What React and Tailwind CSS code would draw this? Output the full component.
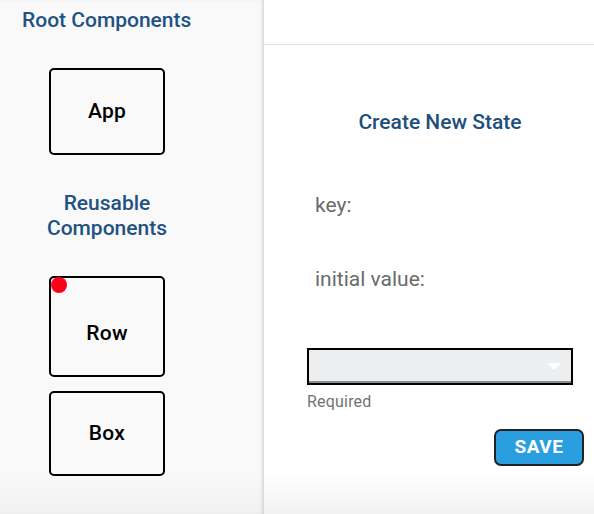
import React from 'react';

const ComponentBox = ({ label, dot, className = '' }) => (
  <div className={`relative flex items-center justify-center border-2 border-black rounded-[5px] bg-[#f9f9f9] w-[116px] ${className}`}>
    {dot && <span className="absolute left-0 top-[-1px] w-[16px] h-[16px] rounded-full bg-[#ff0019]" />}
    <span className="text-[21px] font-medium text-black tracking-[0.3px]">{label}</span>
  </div>
);

const App = () => {
  return (
    <div className="flex w-[594px] h-[514px] overflow-hidden bg-white" style={{ fontFamily: 'Roboto, "Liberation Sans", sans-serif' }}>
      {/* sidebar */}
      <div className="relative w-[264px] shrink-0 bg-gradient-to-b from-[#f9f9f9] from-[92%] to-[#f1f1f1] shadow-[inset_-3px_0_3px_-1px_rgba(0,0,0,0.12)]">
        <h2 className="pl-[22px] pt-[7px] text-[21px] font-medium text-[#1f5283] leading-[26px]">Root Components</h2>
        <div className="pl-[49px] pt-[35px]">
          <ComponentBox label="App" className="h-[87px]" />
        </div>
        <h2 className="w-[214px] pt-[36px] text-center text-[21px] font-medium text-[#1f5283] leading-[25px]">
          Reusable
          <br />
          Components
        </h2>
        <div className="pl-[49px] pt-[35px] flex flex-col gap-[14px]">
          <ComponentBox label="Row" dot className="h-[101px] pt-[14px]" />
          <ComponentBox label="Box" className="h-[85px]" />
        </div>
      </div>

      {/* main panel */}
      <div className="flex-1 flex flex-col bg-gradient-to-b from-white from-[92%] to-[#f2f2f2]">
        <div className="h-[45px] shrink-0 border-b border-[#e3e3e3]" />
        <h1 className="mt-[64px] pl-[22px] text-center text-[21px] font-medium text-[#1d4f7d] leading-[26px]">Create New State</h1>
        <div className="pl-[51px] pt-[57px] text-[21px] text-[#6b6b6b] leading-[26px]">key:</div>
        <div className="pl-[51px] pt-[48px] text-[21px] text-[#6b6b6b] leading-[26px]">initial value:</div>
        <div className="pl-[43px] pt-[56px]">
          <div className="relative w-[266px] h-[37px] border-2 border-black bg-[#eceef0]">
            <div className="absolute left-0 right-0 bottom-0 h-[2px] bg-[#8a8a8a]" />
            <svg className="absolute right-[10px] top-[13px]" width="14" height="8" viewBox="0 0 14 8">
              <path d="M0 0 L14 0 L7 7 Z" fill="#ffffff" />
            </svg>
          </div>
          <div className="pt-[8px] text-[16px] text-[#737373] leading-[18px] tracking-[0.2px]">Required</div>
        </div>
        <div className="flex justify-end pr-[10px] pt-[18px]">
          <button className="w-[90px] h-[37px] rounded-[7px] border-2 border-[#222] bg-[#2a9fe0] text-white text-[19px] font-bold tracking-[0.5px]">
            SAVE
          </button>
        </div>
      </div>
    </div>
  );
};

export default App;
